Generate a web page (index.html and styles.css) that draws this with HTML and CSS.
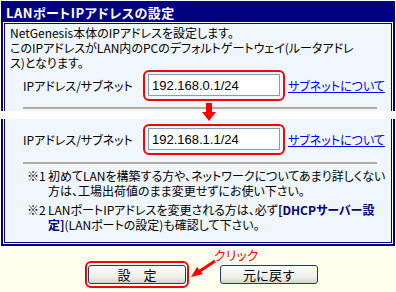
FILE: index.html
```html
<!DOCTYPE html>
<html lang="ja">
  <head>
    <meta charset="UTF-8" />
    <title>LANポートIPアドレスの設定</title>
    <link rel="stylesheet" href="styles.css">
  </head>
  <body>
    <div class="frame frame-top">
      <div class="frame-title">LANポートIPアドレスの設定</div>
      <div class="frame-body">
        <p class="intro">NetGenesis本体のIPアドレスを設定します。<br />このIPアドレスがLAN内のPCのデフォルトゲートウェイ(ルータアドレ<br />ス)となります。</p>
        <div class="row">
          <span class="label">IPアドレス/サブネット</span>
          <span class="mark"><input type="text" class="field" value="192.168.0.1/24" /></span>
          <a href="#" class="help">サブネットについて</a>
        </div>
        <hr class="rule" />
      </div>
    </div>

    <!-- 変更前/変更後のつなぎ -->
    <div class="splice">
      <svg class="down" width="14" height="18" viewBox="0 0 14 18">
        <path d="M4 0h6v9h4l-7 9-7-9h4z" fill="#f00" />
      </svg>
    </div>

    <div class="frame frame-bottom">
      <div class="frame-body">
        <div class="row">
          <span class="label">IPアドレス/サブネット</span>
          <span class="mark"><input type="text" class="field" value="192.168.1.1/24" /></span>
          <a href="#" class="help">サブネットについて</a>
        </div>
        <hr class="rule" />
        <ul class="notes">
          <li><span class="num">※1</span>初めてLANを構築する方や、ネットワークについてあまり詳しくない<br />方は、工場出荷値のまま変更せずにお使い下さい。</li>
          <li><span class="num">※2</span>LANポートIPアドレスを変更される方は、必ず<b>[DHCPサーバー設<br />定]</b>(LANポートの設定)も確認して下さい。</li>
        </ul>
      </div>
    </div>

    <div class="actions">
      <span class="mark mark-btn"><button class="btn">設　定</button></span>
      <button class="btn">元に戻す</button>
      <div class="callout">
        <span>クリック</span>
        <svg width="26" height="20" viewBox="0 0 26 20">
          <path d="M24 2L9 12" stroke="#f00" stroke-width="3" />
          <path d="M0 18l6-10 6 7z" fill="#f00" />
        </svg>
      </div>
    </div>
  </body>
</html>
```

FILE: styles.css
```css
body {
  margin: 0;
  background-color: #ffffef;
  font-family: "Noto Sans CJK JP", sans-serif;
  font-size: 12px;
  font-feature-settings: "palt";
  color: #000;
}
.frame {
  margin: 0 1px;
  border: 2px solid #000080;
  padding: 0 1px;
  background-color: #fff;
}
.frame-top {
  margin-top: 1px;
  border-bottom: 0;
}
.frame-bottom {
  border-top: 0;
  padding-bottom: 1px;
}
.frame-title {
  margin: 0 -1px 1px;
  height: 19px;
  padding-left: 3px;
  background-color: #000080;
  color: #fff;
  font-weight: bold;
  font-size: 13px;
  line-height: 19px;
  letter-spacing: 0.5px;
}
.frame-body {
  border: 1px solid #000080;
  background-color: #eff6fd;
}
.frame-top .frame-body {
  border-bottom: 0;
  padding: 1px 0 1px 5px;
}
.frame-bottom .frame-body {
  border-top: 0;
  padding: 5px 0 10px 5px;
}
.intro {
  margin: 0;
  line-height: 15px;
  white-space: nowrap;
}
.row {
  display: flex;
  align-items: center;
  margin-left: 13px;
}
.label {
  width: 120px;
}
.mark {
  border: 2px solid #f00;
  border-radius: 6px;
  padding: 2px 3px 3px;
}
.field {
  display: block;
  box-sizing: border-box;
  width: 132px;
  height: 22px;
  margin: 0;
  padding: 1px 3px 0;
  border: 1px solid #7f9db9;
  background-color: #fff;
  font-family: "Liberation Sans", Arial, sans-serif;
  font-size: 13px;
}
.help {
  margin-left: 3px;
  color: #00f;
}
.rule {
  margin: 6px 14px 1px 13px;
  border: 0;
  border-top: 2px solid #b3ac9a;
}
.frame-bottom .rule {
  margin-top: 7px;
  margin-bottom: 0;
}
.splice {
  position: relative;
  height: 8px;
  background-color: #fff;
}
.down {
  position: absolute;
  left: 202px;
  top: -8px;
}
.notes {
  list-style: none;
  margin: 4px 0 0 17px;
  padding: 0;
  line-height: 15px;
  white-space: nowrap;
}
.notes li {
  padding-left: 21px;
  text-indent: -21px;
  margin-bottom: 4px;
}
.notes li:last-child {
  margin-bottom: 0;
}
.notes .num {
  display: inline-block;
  width: 21px;
  text-indent: 0;
}
.notes b {
  color: #000080;
}
.actions {
  position: relative;
  display: flex;
  justify-content: center;
  align-items: center;
  gap: 31px;
  padding: 15px 0 0 7px;
}
.mark-btn {
  padding: 2px 1px;
}
.btn {
  display: block;
  width: 98px;
  height: 19px;
  padding: 0;
  border: 1px solid #1c3d6b;
  border-radius: 3px;
  background: linear-gradient(#fff, #ecebe6 70%, #d6d3cb);
  font-family: "Noto Sans CJK JP", sans-serif;
  font-size: 13px;
  line-height: 17px;
}
.callout {
  position: absolute;
  left: 191px;
  top: 2px;
  color: #f00;
  font-size: 13px;
  line-height: 14px;
}
.callout span {
  margin-left: 23px;
}
.callout svg {
  display: block;
  margin-top: -3px;
}
```
